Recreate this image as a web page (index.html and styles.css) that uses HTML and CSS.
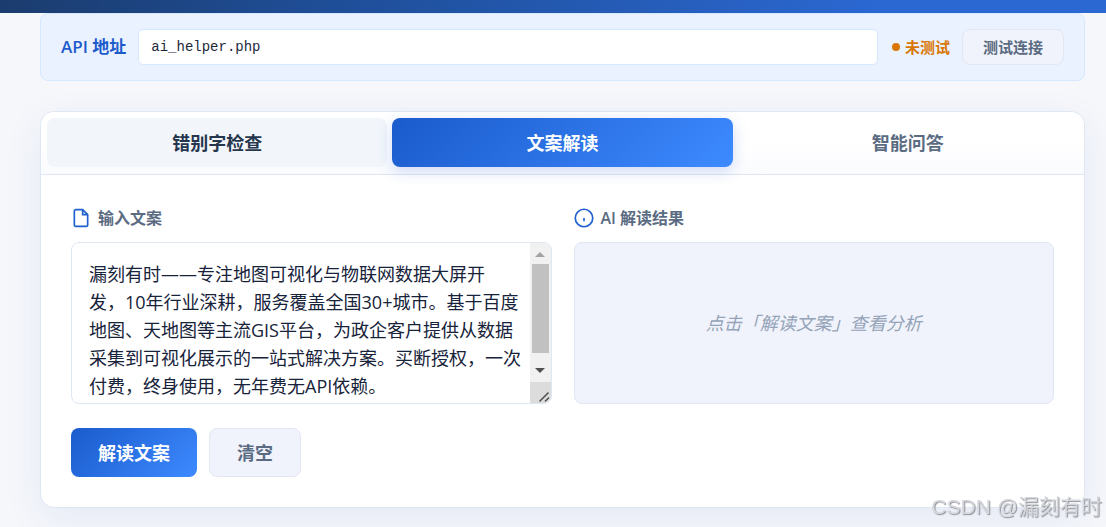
FILE: index.html
```html
<!DOCTYPE html>
<html lang="zh-CN">
<head>
<meta charset="utf-8">
<title>AI 文案助手</title>
<link rel="stylesheet" href="styles.css">
</head>
<body>
<header class="topbar"></header>
<main class="page">
  <section class="api">
    <label class="api-label" for="api-url">API 地址</label>
    <input class="api-input" id="api-url" type="text" value="ai_helper.php">
    <span class="api-status"><span class="dot"></span>未测试</span>
    <button class="btn btn-small" type="button">测试连接</button>
  </section>
  <section class="card">
    <nav class="tabs">
      <button class="tab tab-hover" type="button">错别字检查</button>
      <button class="tab tab-active" type="button">文案解读</button>
      <button class="tab" type="button">智能问答</button>
    </nav>
    <div class="body">
      <div class="columns">
        <div class="column">
          <label class="title" for="copy">
            <svg class="icon" viewBox="0 0 24 24"><path d="M14 2H6a2 2 0 0 0-2 2v16a2 2 0 0 0 2 2h12a2 2 0 0 0 2-2V8z"/><path d="M14 2v6h6"/></svg>
            输入文案
          </label>
          <div class="field">
            <textarea class="copy" id="copy">漏刻有时——专注地图可视化与物联网数据大屏开
发，10年行业深耕，服务覆盖全国30+城市。基于百度
地图、天地图等主流GIS平台，为政企客户提供从数据
采集到可视化展示的一站式解决方案。买断授权，一次
付费，终身使用，无年费无API依赖。</textarea>
            <div class="scroll" aria-hidden="true">
              <svg class="arrow arrow-up" viewBox="0 0 21 21"><path d="M5 14h10l-5-5z"/></svg>
              <div class="rail"><div class="thumb"></div></div>
              <svg class="arrow" viewBox="0 0 21 21"><path d="M5 7h10l-5 5z"/></svg>
              <svg class="grip" viewBox="0 0 21 21"><path d="M9.500 19.500l9-9M15 19.500l4-4"/></svg>
            </div>
          </div>
        </div>
        <div class="column">
          <h2 class="title">
            <svg class="icon" viewBox="0 0 24 24"><circle cx="12" cy="12" r="10.500"/><path d="M12 12v4"/></svg>
            AI 解读结果
          </h2>
          <div class="result">点击「解读文案」查看分析</div>
        </div>
      </div>
      <div class="actions">
        <button class="btn btn-primary" type="button">解读文案</button>
        <button class="btn" type="button">清空</button>
      </div>
    </div>
  </section>
</main>
<div class="watermark">CSDN @漏刻有时</div>
</body>
</html>
```
FILE: styles.css
```css
* { box-sizing: border-box; }
body {
  margin: 0;
  background: #f5f7fb;
  color: #1e293b;
  font: 18px/28px "Open Sans", "Noto Sans CJK SC", sans-serif;
  overflow: hidden;
}
button, input, textarea { font: inherit; color: inherit; }
.topbar {
  height: 13px;
  background: linear-gradient(90deg, #1b3c6e, #1f4e98 30%, #2b68d2 80%);
}
.page {
  display: flex;
  flex-direction: column;
  gap: 30px;
  padding: 0 21px 19px 40px;
}
.api {
  display: flex;
  align-items: center;
  gap: 12px;
  padding: 15px 20px;
  border: 1px solid #d6e8ff;
  border-radius: 8px;
  background: #eaf2ff;
}
.api-label { font-size: 17px; line-height: 26px; font-weight: 600; color: #1d5bcc; }
.api-input {
  flex: 1;
  min-width: 0;
  height: 36px;
  padding: 0 12px;
  border: 1px solid #d6e8ff;
  border-radius: 5px;
  background: #fff;
  font: 14px/24px "Liberation Mono", monospace;
}
.api-status {
  display: flex;
  align-items: center;
  gap: 5px;
  padding-left: 2px;
  font-size: 15px;
  line-height: 26px;
  font-weight: 600;
  color: #d97706;
}
.dot { width: 8px; height: 8px; border-radius: 50%; background: #d97706; }
.btn {
  height: 49px;
  padding: 0 27px;
  border: 1px solid #e2e8f3;
  border-radius: 8px;
  background: #f0f3fb;
  color: #5a6b82;
  font-weight: 700;
}
.btn-small { height: 36px; padding: 0 20px; font-size: 15px; }
.btn-primary {
  border: 0;
  background: linear-gradient(135deg, #1a5bcc, #3d8aff);
  color: #fff;
}
.card {
  border: 1px solid #dfe7f2;
  border-radius: 14px;
  background: #fff;
  box-shadow: 0 12px 40px rgba(26, 60, 160, 0.07);
}
.tabs {
  display: flex;
  gap: 5px;
  padding: 6px 6px 7px;
  border-bottom: 1px solid #dfe7f2;
  border-radius: 14px 14px 0 0;
  background: linear-gradient(#fff 50%, #fafbfe);
}
.tab {
  flex: 1;
  height: 49px;
  border: 0;
  border-radius: 8px;
  background: transparent;
  color: #5a6b82;
  font-weight: 700;
}
.tab-hover { background: #f2f6fb; color: #26364d; }
.tab-active {
  background: linear-gradient(135deg, #1a5bcc, #3d8aff);
  color: #fff;
  box-shadow: 0 4px 16px rgba(26, 80, 200, 0.2);
}
.body {
  display: flex;
  flex-direction: column;
  gap: 24px;
  padding: 30px;
}
.columns { display: grid; grid-template-columns: 1fr 1fr; gap: 22px; }
.column { display: flex; flex-direction: column; gap: 11px; min-width: 0; }
.title {
  display: flex;
  align-items: center;
  gap: 7px;
  margin: 0;
  font-size: 16px;
  line-height: 26px;
  font-weight: 600;
  color: #5a6b82;
}
.icon {
  width: 20px;
  height: 20px;
  fill: none;
  stroke: #1f5fd0;
  stroke-width: 2;
}
.field { position: relative; height: 162px; }
.copy {
  display: block;
  width: 100%;
  height: 100%;
  padding: 17px 21px 0 17px;
  border: 1px solid #dfe7f2;
  border-radius: 8px;
  background: #fff;
  color: #17233a;
  line-height: 28px;
  white-space: pre;
  overflow: hidden;
  resize: none;
}
.scroll {
  position: absolute;
  top: 1px;
  right: 1px;
  bottom: 1px;
  display: flex;
  flex-direction: column;
  width: 21px;
  border-radius: 0 7px 7px 0;
  background: #f1f1f1;
  overflow: hidden;
}
.arrow, .grip { flex: none; width: 21px; height: 21px; }
.arrow { fill: #505050; }
.arrow-up { fill: #a3a3a3; }
.rail { flex: 1; padding: 0 2px; }
.thumb { height: 92%; background: #c1c1c1; }
.grip { background: #dcdcdc; fill: none; stroke: #505050; stroke-width: 1.500; }
.result {
  display: grid;
  place-items: center;
  height: 162px;
  border: 1px solid #dfe7f2;
  border-radius: 8px;
  background: #f0f3fb;
  color: #94a3b8;
  font-style: italic;
}
.actions { display: flex; gap: 12px; }
.watermark {
  position: fixed;
  right: 4px;
  bottom: 4px;
  font: 21px/32px "Liberation Sans", "Noto Sans CJK SC", sans-serif;
  color: #d5d7dc;
  text-shadow: 1px 1px 1px #8d9096;
}
```
